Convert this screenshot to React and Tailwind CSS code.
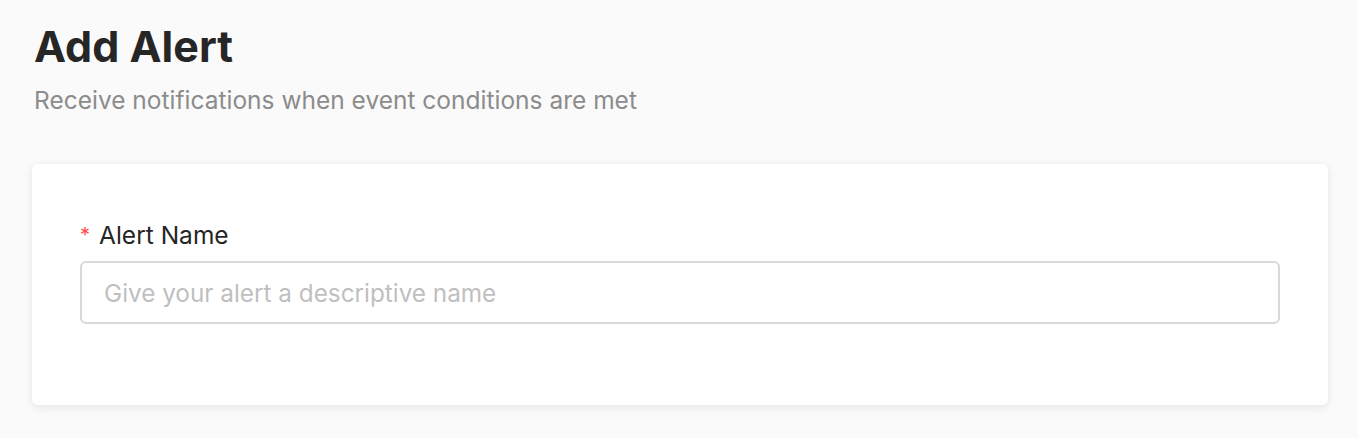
export default function App() {
    return (
        <div className="min-h-[438px] bg-[#fafafa] px-[32px] pt-[22px] font-['Inter','Liberation_Sans',sans-serif]">
            {/* Header */}
            <h1 className="pl-[2px] text-[43px] font-bold leading-[48px] text-[#262626]">Add Alert</h1>
            <p className="mt-[14px] pl-[2px] text-[24.5px] leading-[32px] text-[#8c8c8c]">
                Receive notifications when event conditions are met
            </p>

            {/* Card */}
            <div className="mt-[48px] w-[1296px] rounded-[6px] bg-white px-[48px] pt-[55px] pb-[81px] shadow-[0_2px_8px_rgba(0,0,0,0.09)]">
                <label className="flex items-center gap-[9px] text-[24.5px] leading-[32px] text-[#262626]">
                    <span className="text-[20px] text-[#ff4d4f]">*</span>
                    Alert Name
                </label>
                <input
                    className="mt-[10px] block h-[63px] w-full rounded-[6px] border-2 border-[#d9d9d9] px-[22px] text-[24.3px] text-[#262626] outline-none placeholder:text-[#bfbfbf]"
                    placeholder="Give your alert a descriptive name"
                />
            </div>
        </div>
    );
}
